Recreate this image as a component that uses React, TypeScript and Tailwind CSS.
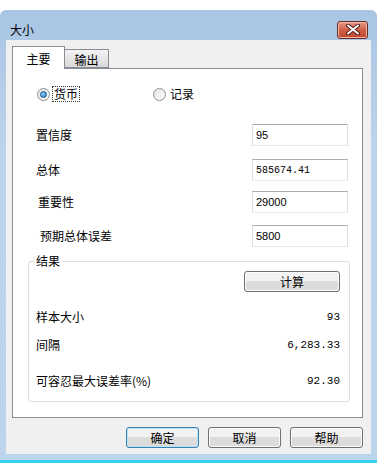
import type { ReactNode } from 'react';

const CJK = "font-['SimSun','Noto_Sans_CJK_SC',sans-serif]";

function Radio({ checked, label, focused }: { checked?: boolean; label: string; focused?: boolean }) {
  return (
    <div className="flex items-center gap-[3px]">
      <span className="relative flex h-[13px] w-[13px] items-center justify-center rounded-full border border-[#8f8f8f] bg-gradient-to-br from-[#e4e4e4] to-[#fcfcfc]">
        {checked && (
          <span className="h-[7px] w-[7px] rounded-full border border-[#1c5a8e] bg-[radial-gradient(circle_at_35%_35%,#8fd0ff,#1d6fb8)]" />
        )}
      </span>
      <span className={`px-[1px] leading-[14px] ${focused ? 'outline outline-1 outline-dotted outline-[#333]' : ''}`}>{label}</span>
    </div>
  );
}

function Field({ label, value, labelPad, mono, top }: { label: string; value: string; labelPad: string; mono?: boolean; top: string }) {
  return (
    <div className={`flex h-[22px] items-center justify-between pr-[14px] ${top}`}>
      <span className={labelPad}>{label}</span>
      <div
        className={`flex h-[22px] w-[96px] items-center border border-[#abadb3] border-t-[#abadb3] border-x-[#dbdfe6] border-b-[#e3e9ef] bg-white pl-[3px] ${
          mono ? "font-['Liberation_Mono',monospace] text-[10px]" : "font-['Liberation_Sans',sans-serif] text-[11px]"
        }`}
      >
        {value}
      </div>
    </div>
  );
}

function Btn({ children, width, primary }: { children: ReactNode; width: string; primary?: boolean }) {
  return (
    <div
      className={`flex h-[21px] ${width} items-center justify-center rounded-[3px] border ${
        primary ? 'border-[#3c7fb1] shadow-[inset_0_0_0_1px_#b8e4fb]' : 'border-[#707070] shadow-[inset_0_0_0_1px_#fbfbfb]'
      } bg-gradient-to-b from-[#f2f2f2] from-50% to-[#dcdcdc] to-50% text-[12px] text-black`}
    >
      {children}
    </div>
  );
}

function ResultRow({ label, value, top }: { label: string; value: string; top: string }) {
  return (
    <div className={`flex h-[14px] items-center justify-between ${top}`}>
      <span>{label}</span>
      <span className="font-['Liberation_Mono',monospace] text-[11px]">{value}</span>
    </div>
  );
}

export default function App() {
  return (
    <div className={`flex h-[463px] w-[377px] flex-col bg-white text-[12px] text-black ${CJK}`}>
      <div className="h-[10px] shrink-0 bg-white" />
      <div className="flex flex-1 flex-col rounded-t-[6px] bg-gradient-to-b from-[#a9c5e4] via-[#bcd3ec] via-30% to-[#bdd4ed]">
        {/* title bar */}
        <div className="flex h-[30px] shrink-0 items-center justify-between pl-[10px] pr-[9px]">
          <span className="mt-[10px] text-[12px]">大小</span>
          <div className="mt-[9px] flex h-[18px] w-[31px] items-center justify-center rounded-[3px] border border-[#6d2a22] bg-gradient-to-b from-[#e59b8a] via-[#d05f47] via-50% to-[#c2452c] shadow-[inset_0_0_0_1px_#eeb7a9]">
            <svg width="14" height="11" viewBox="0 0 14 11">
              <path d="M2 1.5 L12 9.5 M12 1.5 L2 9.5" stroke="#5a1f18" strokeWidth="4" strokeLinecap="round" />
              <path d="M2 1.5 L12 9.5 M12 1.5 L2 9.5" stroke="#ffffff" strokeWidth="2" strokeLinecap="round" />
            </svg>
          </div>
        </div>
        {/* body */}
        <div className="mx-[6px] flex h-[414px] flex-col bg-[#f0f0f0] pl-[6px] pr-[8px] pt-[6px]">
          {/* tabs */}
          <div className="relative z-10 flex h-[22px] items-end">
            <div className="-mb-[1px] flex h-[23px] w-[53px] items-start justify-center border border-b-0 border-[#898c95] bg-white pt-[3px]">
              主要
            </div>
            <div className="flex h-[19px] w-[44px] items-start justify-center border border-l-0 border-[#898c95] bg-gradient-to-b from-[#f3f3f3] to-[#d9d9d9] pt-[1px]">
              输出
            </div>
          </div>
          {/* tab panel */}
          <div className="flex h-[350px] flex-col border border-[#898c95] bg-white">
            <div className="mt-[18px] flex h-[14px] items-center pl-[24px]">
              <div className="w-[116px]">
                <Radio checked label="货币" focused />
              </div>
              <Radio label="记录" />
            </div>
            <Field top="mt-[23px]" label="置信度" value="95" labelPad="pl-[23px]" />
            <Field top="mt-[13px]" label="总体" value="585674.41" labelPad="pl-[23px]" mono />
            <Field top="mt-[10px]" label="重要性" value="29000" labelPad="pl-[25px]" />
            <Field top="mt-[12px]" label="预期总体误差" value="5800" labelPad="pl-[27px]" />
            <fieldset className="ml-[15px] mr-[12px] mt-[7px] h-[148px] shrink-0 rounded-[3px] border border-[#d5dfe5] pl-[7px] pr-[9px]">
              <legend className="ml-[-2px] px-[2px] leading-[14px]">结果</legend>
              <div className="mt-[3px] flex justify-end">
                <Btn width="w-[96px]">计算</Btn>
              </div>
              <ResultRow top="mt-[18px]" label="样本大小" value="93" />
              <ResultRow top="mt-[14px]" label="间隔" value="6,283.33" />
              <ResultRow top="mt-[22px]" label="可容忍最大误差率(%)" value="92.30" />
            </fieldset>
          </div>
          {/* buttons */}
          <div className="mt-[9px] flex justify-end gap-[9px]">
            <Btn width="w-[73px]" primary>确定</Btn>
            <Btn width="w-[73px]">取消</Btn>
            <Btn width="w-[73px]">帮助</Btn>
          </div>
        </div>
        <div className="flex-1" />
        <div className="h-[3px] shrink-0 bg-[#33d1ee]" />
      </div>
    </div>
  );
}
